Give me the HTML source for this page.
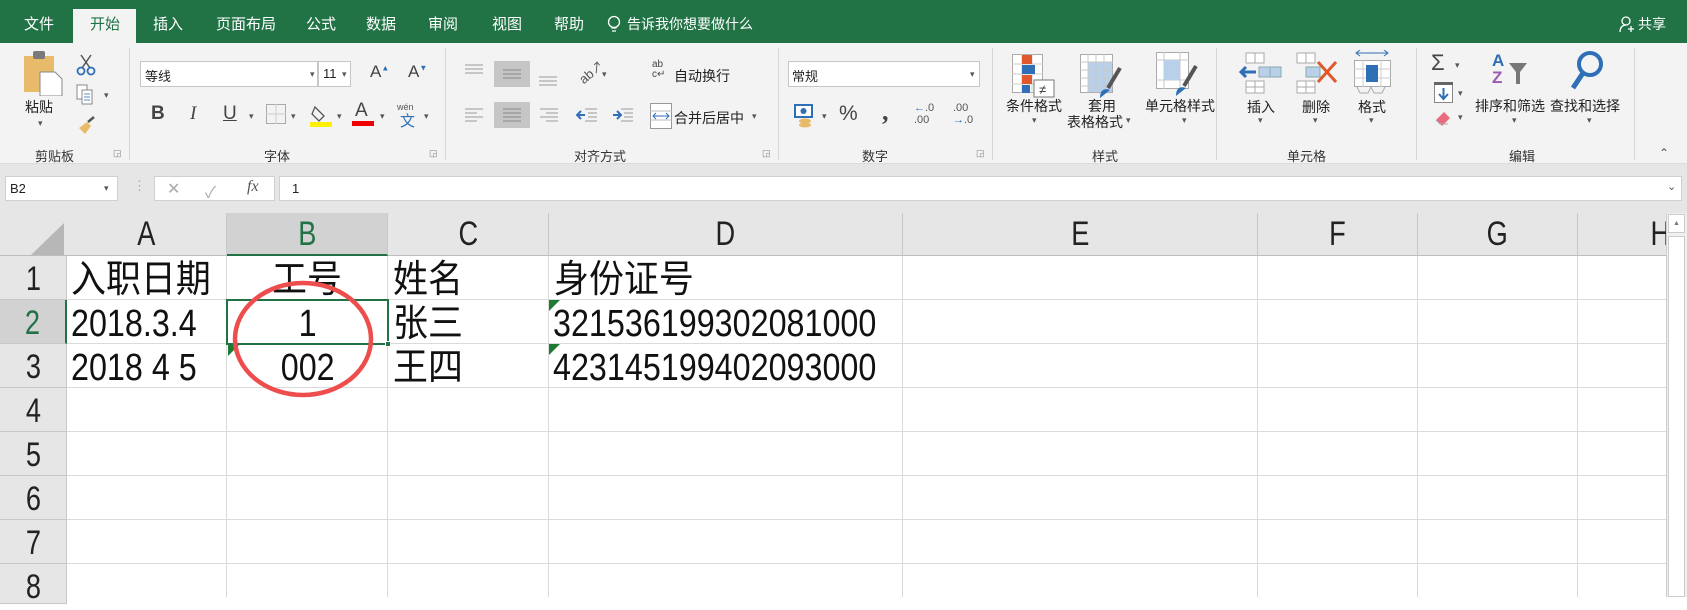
<!DOCTYPE html>
<html><head><meta charset="utf-8">
<style>
*{margin:0;padding:0;box-sizing:border-box}
body{width:1687px;height:597px;overflow:hidden;background:#fff;font-family:"Liberation Sans","Noto Sans CJK SC",sans-serif;position:relative}
.a{position:absolute;white-space:nowrap}
.t{color:#fff;font-size:15px;top:13px}
.r{font-size:13px;color:#222}
.gl{font-size:13px;color:#333;top:146px}
.sep{position:absolute;top:48px;width:1px;height:112px;background:#d6d6d6}
.ch{position:absolute;top:213px;height:43px;font-size:34px;color:#222;text-align:center;line-height:43px;border-right:1px solid #c8c8c8}
.ch span,.rh span{display:inline-block;transform:scaleX(.8)}
.rh{position:absolute;left:0;width:67px;height:44px;font-size:34px;color:#222;text-align:center;line-height:46px;border-bottom:1px solid #c8c8c8;background:#e6e6e6;border-right:1px solid #c8c8c8}
.hl{position:absolute;left:67px;width:1600px;height:1px;background:#dadada}
.vl{position:absolute;top:256px;width:1px;height:341px;background:#dadada}
.c{position:absolute;font-size:38px;color:#111;line-height:44px;height:44px}
.n{display:inline-block;transform:scaleX(.85);transform-origin:left center}
.cj{display:inline-block;transform:scaleX(.92);transform-origin:left center}
.tri{position:absolute;width:0;height:0;border-top:11px solid #1e7b34;border-right:11px solid transparent}
.dd{font-size:9px;color:#555}
</style></head><body>
<!-- title bar -->
<div class="a" style="left:0;top:0;width:1687px;height:43px;background:#217346"></div>
<div class="a" style="left:73px;top:9px;width:63px;height:34px;background:#f3f3f3"></div>
<div class="a t" style="left:24px">文件</div>
<div class="a t" style="left:90px;color:#217346">开始</div>
<div class="a t" style="left:153px">插入</div>
<div class="a t" style="left:216px">页面布局</div>
<div class="a t" style="left:306px">公式</div>
<div class="a t" style="left:366px">数据</div>
<div class="a t" style="left:428px">审阅</div>
<div class="a t" style="left:492px">视图</div>
<div class="a t" style="left:554px">帮助</div>
<svg class="a" style="left:607px;top:15px" width="14" height="20"><circle cx="7" cy="7" r="5.5" fill="none" stroke="#fff" stroke-width="1.3"/><path d="M4.5 13h5M5 16h4" stroke="#fff" stroke-width="1.3"/></svg>
<div class="a t" style="left:627px;font-size:14px;top:14px">告诉我你想要做什么</div>
<svg class="a" style="left:1619px;top:15px" width="16" height="18"><circle cx="7" cy="6" r="4" fill="none" stroke="#fff" stroke-width="1.3"/><path d="M1 17c0-5 3-7 6-7M12 11v6M9 14h6" stroke="#fff" stroke-width="1.3" fill="none"/></svg>
<div class="a t" style="left:1638px;font-size:14px;top:14px">共享</div>
<!-- ribbon -->
<div class="a" style="left:0;top:43px;width:1687px;height:121px;background:#f3f3f3;border-bottom:1px solid #dcdcdc"></div>
<div class="sep" style="left:129px"></div><div class="sep" style="left:445px"></div><div class="sep" style="left:778px"></div><div class="sep" style="left:992px"></div><div class="sep" style="left:1216px"></div><div class="sep" style="left:1416px"></div><div class="sep" style="left:1634px"></div>
<!-- clipboard -->
<svg class="a" style="left:22px;top:50px" width="44" height="46"><rect x="2" y="6" width="30" height="36" fill="#e8bb6a"/><rect x="11" y="1" width="12" height="8" rx="2" fill="#7a7a7a"/><path d="M18 22h15l7 7v17H18z" fill="#fff" stroke="#888"/></svg>
<div class="a r" style="left:25px;top:97px;font-size:14px">粘贴</div>
<div class="a dd" style="left:38px;top:118px">▾</div>
<svg class="a" style="left:76px;top:54px" width="20" height="22"><path d="M5 1l9 13M15 1L6 14" stroke="#555" stroke-width="1.5"/><circle cx="5" cy="17" r="3.5" fill="none" stroke="#2f6fb5" stroke-width="1.8"/><circle cx="15" cy="17" r="3.5" fill="none" stroke="#2f6fb5" stroke-width="1.8"/></svg>
<svg class="a" style="left:76px;top:84px" width="18" height="22"><rect x="1" y="1" width="10" height="14" fill="#fff" stroke="#888"/><rect x="6" y="6" width="10" height="14" fill="#fff" stroke="#888"/><path d="M8 10h6M8 13h6M8 16h6" stroke="#5b8cc9"/></svg>
<div class="a dd" style="left:104px;top:90px">▾</div>
<svg class="a" style="left:76px;top:116px" width="20" height="18"><path d="M3 12l8-6 4 4-6 8z" fill="#e8bb6a"/><path d="M12 6l6-5" stroke="#555" stroke-width="2.5"/></svg>
<div class="a gl" style="left:35px">剪贴板</div>
<div class="a" style="left:113px;top:148px;font-size:9px;color:#888">◲</div>
<!-- font -->
<div class="a" style="left:140px;top:61px;width:178px;height:26px;background:#fff;border:1px solid #c6c6c6"></div>
<div class="a r" style="left:145px;top:66px">等线</div>
<div class="a dd" style="left:310px;top:69px">▾</div>
<div class="a" style="left:318px;top:61px;width:33px;height:26px;background:#fff;border:1px solid #c6c6c6"></div>
<div class="a r" style="left:323px;top:66px">11</div><div class="a dd" style="left:342px;top:69px">▾</div>
<div class="a" style="left:370px;top:62px;font-size:17px;color:#444">A<sup style="font-size:8px;color:#2f6fb5">▲</sup></div>
<div class="a" style="left:408px;top:62px;font-size:17px;color:#444">A<sup style="font-size:8px;color:#2f6fb5">▼</sup></div>
<div class="a" style="left:151px;top:103px;font-size:19px;font-weight:bold;color:#444">B</div>
<div class="a" style="left:190px;top:103px;font-size:19px;font-style:italic;font-family:'Liberation Serif',serif;color:#444">I</div>
<div class="a" style="left:223px;top:103px;font-size:19px;text-decoration:underline;color:#444">U</div><div class="a dd" style="left:249px;top:111px">▾</div>
<svg class="a" style="left:266px;top:104px" width="20" height="20"><rect x=".5" y=".5" width="19" height="19" fill="none" stroke="#aaa"/><path d="M10 0v20M0 10h20" stroke="#ccc"/></svg><div class="a dd" style="left:291px;top:111px">▾</div>
<svg class="a" style="left:309px;top:103px" width="24" height="24"><path d="M6 4l9 9-5 5-7-7z" fill="none" stroke="#555" stroke-width="1.3"/><rect x="1" y="19" width="22" height="5" fill="#ffef00"/></svg><div class="a dd" style="left:337px;top:111px">▾</div>
<div class="a" style="left:355px;top:100px;font-size:19px;color:#444">A</div><div class="a" style="left:352px;top:121px;width:22px;height:5px;background:#e00"></div><div class="a dd" style="left:380px;top:111px">▾</div>
<div class="a" style="left:397px;top:102px;font-size:9px;color:#555">wén</div><div class="a" style="left:400px;top:110px;font-size:15px;color:#2f6fb5">文</div><div class="a dd" style="left:424px;top:111px">▾</div>
<div class="a gl" style="left:264px">字体</div>
<div class="a" style="left:429px;top:148px;font-size:9px;color:#888">◲</div>
<!-- alignment -->
<svg class="a" style="left:465px;top:64px" width="20" height="10"><path d="M0 1h18M0 5h18M0 9h18" stroke="#999"/></svg>
<div class="a" style="left:494px;top:61px;width:36px;height:26px;background:#c6c6c6"></div>
<svg class="a" style="left:503px;top:69px" width="20" height="10"><path d="M0 1h18M0 5h18M0 9h18" stroke="#888"/></svg>
<svg class="a" style="left:539px;top:76px" width="20" height="10"><path d="M0 1h18M0 5h18M0 9h18" stroke="#999"/></svg>
<div class="a" style="left:577px;top:62px;font-size:13px;color:#555;transform:rotate(-40deg)">ab↗</div><div class="a dd" style="left:602px;top:69px">▾</div>
<div class="a" style="left:652px;top:60px;font-size:10px;color:#444;line-height:10px">ab<br>c↵</div>
<div class="a r" style="left:674px;top:66px;font-size:14px">自动换行</div>
<svg class="a" style="left:465px;top:108px" width="20" height="14"><path d="M0 1h18M0 5h12M0 9h18M0 13h12" stroke="#999"/></svg>
<div class="a" style="left:494px;top:102px;width:36px;height:26px;background:#c6c6c6"></div>
<svg class="a" style="left:503px;top:108px" width="20" height="14"><path d="M0 1h18M0 5h18M0 9h18M0 13h18" stroke="#888"/></svg>
<svg class="a" style="left:540px;top:108px" width="20" height="14"><path d="M0 1h18M6 5h12M0 9h18M6 13h12" stroke="#999"/></svg>
<svg class="a" style="left:576px;top:107px" width="22" height="16"><path d="M9 2h12M12 6h9M12 10h9M9 14h12" stroke="#999"/><path d="M9 8H1M5 4L1 8l4 4" stroke="#2f6fb5" stroke-width="2" fill="none"/></svg>
<svg class="a" style="left:612px;top:107px" width="22" height="16"><path d="M9 2h12M12 6h9M12 10h9M9 14h12" stroke="#999"/><path d="M1 8h8M5 4l4 4-4 4" stroke="#2f6fb5" stroke-width="2" fill="none"/></svg>
<svg class="a" style="left:650px;top:103px" width="22" height="26"><rect x=".5" y=".5" width="21" height="25" fill="#fff" stroke="#999"/><path d="M0 8h22M0 17h22" stroke="#bbb"/><path d="M3 13h16M6 10l-3 3 3 3M16 10l3 3-3 3" stroke="#2f6fb5" fill="none"/></svg>
<div class="a r" style="left:674px;top:108px;font-size:14px">合并后居中</div><div class="a dd" style="left:752px;top:111px">▾</div>
<div class="a gl" style="left:574px">对齐方式</div>
<div class="a" style="left:762px;top:148px;font-size:9px;color:#888">◲</div>
<!-- number -->
<div class="a" style="left:788px;top:61px;width:192px;height:26px;background:#fff;border:1px solid #c6c6c6"></div>
<div class="a r" style="left:792px;top:66px">常规</div><div class="a dd" style="left:970px;top:69px">▾</div>
<svg class="a" style="left:794px;top:104px" width="20" height="24"><rect x="1" y="1" width="17" height="12" fill="#fff" stroke="#2f6fb5" stroke-width="2"/><circle cx="9.5" cy="7" r="3" fill="#2f6fb5"/><ellipse cx="11" cy="17" rx="6" ry="2.5" fill="#e8bb6a"/><ellipse cx="11" cy="21" rx="6" ry="2.5" fill="#e8bb6a"/></svg><div class="a dd" style="left:822px;top:111px">▾</div>
<div class="a" style="left:839px;top:102px;font-size:21px;color:#444">%</div>
<div class="a" style="left:882px;top:97px;font-size:26px;font-weight:bold;color:#444;font-family:'Liberation Serif',serif">,</div>
<div class="a" style="left:914px;top:102px;font-size:11px;color:#555;line-height:12px"><span style="color:#2f6fb5">←</span>.0<br>.00</div>
<div class="a" style="left:953px;top:102px;font-size:11px;color:#555;line-height:12px">.00<br><span style="color:#2f6fb5">→</span>.0</div>
<div class="a gl" style="left:862px">数字</div>
<div class="a" style="left:976px;top:148px;font-size:9px;color:#888">◲</div>
<!-- styles -->
<svg class="a" style="left:1012px;top:54px" width="44" height="44"><rect x=".5" y=".5" width="30" height="38" fill="#fff" stroke="#aaa"/><path d="M10 0v39M20 0v39M0 10h31M0 20h31M0 30h31" stroke="#ccc"/><rect x="10" y="1" width="10" height="9" fill="#e0582b"/><rect x="10" y="11" width="13" height="9" fill="#2f6fb5"/><rect x="10" y="21" width="10" height="9" fill="#e0582b"/><rect x="10" y="31" width="8" height="8" fill="#2f6fb5"/><rect x="22" y="26" width="20" height="17" fill="#fff" stroke="#777"/><text x="27" y="40" font-size="13" fill="#333">≠</text></svg>
<div class="a r" style="left:1006px;top:96px;font-size:14px">条件格式</div><div class="a dd" style="left:1032px;top:115px">▾</div>
<svg class="a" style="left:1080px;top:54px" width="44" height="44"><rect x=".5" y=".5" width="32" height="38" fill="#fff" stroke="#aaa"/><rect x="8" y="8" width="24" height="30" fill="#b9d0ea"/><path d="M8 0v39M16 0v39M24 0v39M0 8h33M0 16h33M0 24h33M0 32h33" stroke="#c8c8c8"/><path d="M28 34l12-20" stroke="#555" stroke-width="4"/><path d="M20 44c0-8 4-10 10-8z" fill="#2f6fb5"/></svg>
<div class="a r" style="left:1088px;top:96px;font-size:14px">套用</div>
<div class="a r" style="left:1067px;top:112px;font-size:14px">表格格式</div><div class="a dd" style="left:1126px;top:115px">▾</div>
<svg class="a" style="left:1156px;top:52px" width="44" height="46"><rect x=".5" y=".5" width="32" height="36" fill="#fff" stroke="#aaa"/><path d="M8 0v37M24 0v37M0 8h33M0 28h33" stroke="#c8c8c8"/><rect x="8" y="8" width="16" height="20" fill="#b9d0ea"/><path d="M28 34l12-20" stroke="#555" stroke-width="4"/><path d="M20 44c0-8 4-10 10-8z" fill="#2f6fb5"/></svg>
<div class="a r" style="left:1145px;top:96px;font-size:14px">单元格样式</div><div class="a dd" style="left:1182px;top:115px">▾</div>
<div class="a gl" style="left:1092px">样式</div>
<!-- cells -->
<svg class="a" style="left:1239px;top:52px" width="44" height="42"><path d="M7 1h18v10H7zM16 1v10M7 29h18v12H7zM16 29v12M7 35h18" fill="#fff" stroke="#aaa"/><rect x="20" y="15" width="22" height="10" fill="#b9d0ea" stroke="#8aa"/><path d="M31 15v10" stroke="#8aa"/><path d="M17 20H2M7 15l-5 5 5 5" stroke="#2f6fb5" stroke-width="3" fill="none"/></svg>
<div class="a r" style="left:1247px;top:97px;font-size:14px">插入</div><div class="a dd" style="left:1258px;top:115px">▾</div>
<svg class="a" style="left:1296px;top:52px" width="44" height="42"><path d="M1 1h18v10H1zM10 1v10M1 29h18v12H1zM10 29v12M1 35h18" fill="#fff" stroke="#aaa"/><rect x="10" y="15" width="14" height="10" fill="#b9d0ea" stroke="#8aa"/><path d="M22 10l18 20M40 10L22 30" stroke="#e0582b" stroke-width="3"/></svg>
<div class="a r" style="left:1302px;top:97px;font-size:14px">删除</div><div class="a dd" style="left:1313px;top:115px">▾</div>
<svg class="a" style="left:1354px;top:50px" width="40" height="46"><path d="M2 3h32M6 0L2 3l4 3M30 0l4 3-4 3" stroke="#2f6fb5" fill="none"/><rect x=".5" y="10.5" width="36" height="26" fill="#fff" stroke="#aaa"/><path d="M9 10v27M27 10v27M0 19h37M0 28h37" stroke="#ccc"/><rect x="12" y="15" width="12" height="17" fill="#2f6fb5"/><path d="M3 37l3 6h8l3-6M17 37l3 6h8l3-6" fill="none" stroke="#aaa"/></svg>
<div class="a r" style="left:1358px;top:97px;font-size:14px">格式</div><div class="a dd" style="left:1369px;top:115px">▾</div>
<div class="a gl" style="left:1287px">单元格</div>
<!-- editing -->
<div class="a" style="left:1431px;top:50px;font-size:22px;color:#444">Σ</div><div class="a dd" style="left:1455px;top:60px">▾</div>
<svg class="a" style="left:1434px;top:82px" width="20" height="22"><rect x=".5" y=".5" width="18" height="20" fill="#fff" stroke="#888"/><rect x="0" y="0" width="19" height="3" fill="#666"/><path d="M9.5 6v11M5 12l4.5 5 4.5-5" stroke="#2f6fb5" stroke-width="2" fill="none"/></svg><div class="a dd" style="left:1458px;top:88px">▾</div>
<svg class="a" style="left:1434px;top:110px" width="20" height="16"><path d="M2 10l8-8 6 6-8 8z" fill="#e86b80"/><path d="M2 10l4 4 8 0" stroke="#aaa" fill="none"/></svg><div class="a dd" style="left:1458px;top:112px">▾</div>
<div class="a" style="left:1492px;top:52px;font-size:17px;color:#2f6fb5;line-height:17px;font-weight:bold">A<br><span style="color:#9b59b6">Z</span></div>
<svg class="a" style="left:1508px;top:62px" width="20" height="24"><path d="M1 1h18l-7 9v12h-4V10z" fill="#777"/></svg>
<svg class="a" style="left:1570px;top:50px" width="34" height="42"><circle cx="20" cy="14" r="11" fill="none" stroke="#2f6fb5" stroke-width="4"/><path d="M13 23L3 38" stroke="#2f6fb5" stroke-width="5"/></svg>
<div class="a r" style="left:1475px;top:96px;font-size:14px">排序和筛选</div><div class="a dd" style="left:1512px;top:115px">▾</div>
<div class="a r" style="left:1550px;top:96px;font-size:14px">查找和选择</div><div class="a dd" style="left:1587px;top:115px">▾</div>
<div class="a gl" style="left:1509px">编辑</div>
<div class="a" style="left:1659px;top:146px;font-size:12px;color:#555">⌃</div>
<!-- formula bar -->
<div class="a" style="left:0;top:164px;width:1687px;height:49px;background:#e6e6e6"></div>
<div class="a" style="left:5px;top:176px;width:113px;height:25px;background:#fff;border:1px solid #d0d0d0"></div>
<div class="a r" style="left:10px;top:181px">B2</div><div class="a dd" style="left:104px;top:183px">▾</div>
<div class="a" style="left:133px;top:178px;font-size:13px;color:#aaa">⋮</div>
<div class="a" style="left:154px;top:176px;width:121px;height:25px;background:#fff;border:1px solid #d0d0d0"></div>
<div class="a" style="left:167px;top:179px;font-size:16px;color:#aaa">✕</div>
<div class="a" style="left:205px;top:179px;font-size:16px;color:#aaa">✓</div>
<div class="a" style="left:247px;top:178px;font-size:16px;font-style:italic;font-family:'Liberation Serif',serif;color:#555">fx</div>
<div class="a" style="left:279px;top:176px;width:1403px;height:25px;background:#fff;border:1px solid #d0d0d0"></div>
<div class="a r" style="left:292px;top:181px">1</div>
<div class="a" style="left:1667px;top:180px;font-size:11px;color:#555">⌄</div>
<!-- grid headers -->
<div class="a" style="left:0;top:213px;width:1666px;height:43px;background:#e6e6e6;border-bottom:1px solid #bdbdbd"></div>
<svg class="a" style="left:15px;top:222px" width="50" height="34"><path d="M49 1V33H16z" fill="#b7b7b7"/></svg>
<div class="ch" style="left:67px;width:160px"><span>A</span></div>
<div class="ch" style="left:227px;width:161px;background:#d2d2d2;color:#217346;border-bottom:2px solid #217346;height:43px"><span>B</span></div>
<div class="ch" style="left:388px;width:161px"><span>C</span></div>
<div class="ch" style="left:549px;width:354px"><span>D</span></div>
<div class="ch" style="left:903px;width:355px"><span>E</span></div>
<div class="ch" style="left:1258px;width:160px"><span>F</span></div>
<div class="ch" style="left:1418px;width:160px"><span>G</span></div>
<div class="ch" style="left:1578px;width:88px;text-align:left;padding-left:70px;overflow:hidden;border:0"><span>H</span></div>
<!-- scrollbar -->
<div class="a" style="left:1666px;top:213px;width:21px;height:384px;background:#f0f0f0;border-left:1px solid #d0d0d0"></div>
<div class="a" style="left:1668px;top:214px;width:17px;height:19px;background:#fff;border:1px solid #ccc;font-size:7px;color:#777;text-align:center;line-height:17px">▲</div>
<div class="a" style="left:1668px;top:236px;width:17px;height:361px;background:#fff;border:1px solid #ccc"></div>
<!-- row headers -->
<div class="rh" style="top:256px"><span>1</span></div>
<div class="rh" style="top:300px;background:#d2d2d2;color:#217346;border-right:2px solid #217346"><span>2</span></div>
<div class="rh" style="top:344px"><span>3</span></div>
<div class="rh" style="top:388px"><span>4</span></div>
<div class="rh" style="top:432px"><span>5</span></div>
<div class="rh" style="top:476px"><span>6</span></div>
<div class="rh" style="top:520px"><span>7</span></div>
<div class="rh" style="top:564px;height:40px"><span>8</span></div>
<!-- grid lines -->
<div class="hl" style="top:299px"></div><div class="hl" style="top:343px"></div><div class="hl" style="top:387px"></div><div class="hl" style="top:431px"></div><div class="hl" style="top:475px"></div><div class="hl" style="top:519px"></div><div class="hl" style="top:563px"></div>
<div class="vl" style="left:226px"></div><div class="vl" style="left:387px"></div><div class="vl" style="left:548px"></div><div class="vl" style="left:902px"></div><div class="vl" style="left:1257px"></div><div class="vl" style="left:1417px"></div><div class="vl" style="left:1577px"></div>
<div class="a" style="left:1666px;top:256px;width:1px;height:341px;background:#ccc"></div>
<!-- cells -->
<div class="c" style="left:71px;top:258px"><span class="cj">入职日期</span></div>
<div class="c" style="left:227px;width:161px;text-align:center;top:258px"><span class="cj" style="transform-origin:center">工号</span></div>
<div class="c" style="left:393px;top:258px"><span class="cj">姓名</span></div>
<div class="c" style="left:554px;top:258px"><span class="cj">身份证号</span></div>
<div class="c" style="left:71px;top:302px"><span class="n">2018.3.4</span></div>
<div class="c" style="left:227px;width:161px;text-align:center;top:302px"><span class="n" style="transform-origin:center">1</span></div>
<div class="c" style="left:393px;top:302px"><span class="cj">张三</span></div>
<div class="c" style="left:553px;top:302px"><span class="n">321536199302081000</span></div>
<div class="c" style="left:71px;top:346px"><span class="n">2018 4 5</span></div>
<div class="c" style="left:227px;width:161px;text-align:center;top:346px"><span class="n" style="transform-origin:center">002</span></div>
<div class="c" style="left:393px;top:346px"><span class="cj">王四</span></div>
<div class="c" style="left:553px;top:346px"><span class="n">423145199402093000</span></div>
<div class="tri" style="left:549px;top:300px"></div>
<div class="tri" style="left:549px;top:344px"></div>
<div class="tri" style="left:228px;top:345px"></div>
<!-- selection -->
<div class="a" style="left:226px;top:299px;width:163px;height:46px;border:2px solid #217346"></div>
<div class="a" style="left:385px;top:341px;width:6px;height:6px;background:#217346;border:1px solid #fff"></div>
<!-- red circle -->
<svg class="a" style="left:0;top:0" width="1687" height="597"><ellipse cx="303" cy="339" rx="68" ry="56" fill="none" stroke="#ee4d4d" stroke-width="4.5"/></svg>
</body></html>
